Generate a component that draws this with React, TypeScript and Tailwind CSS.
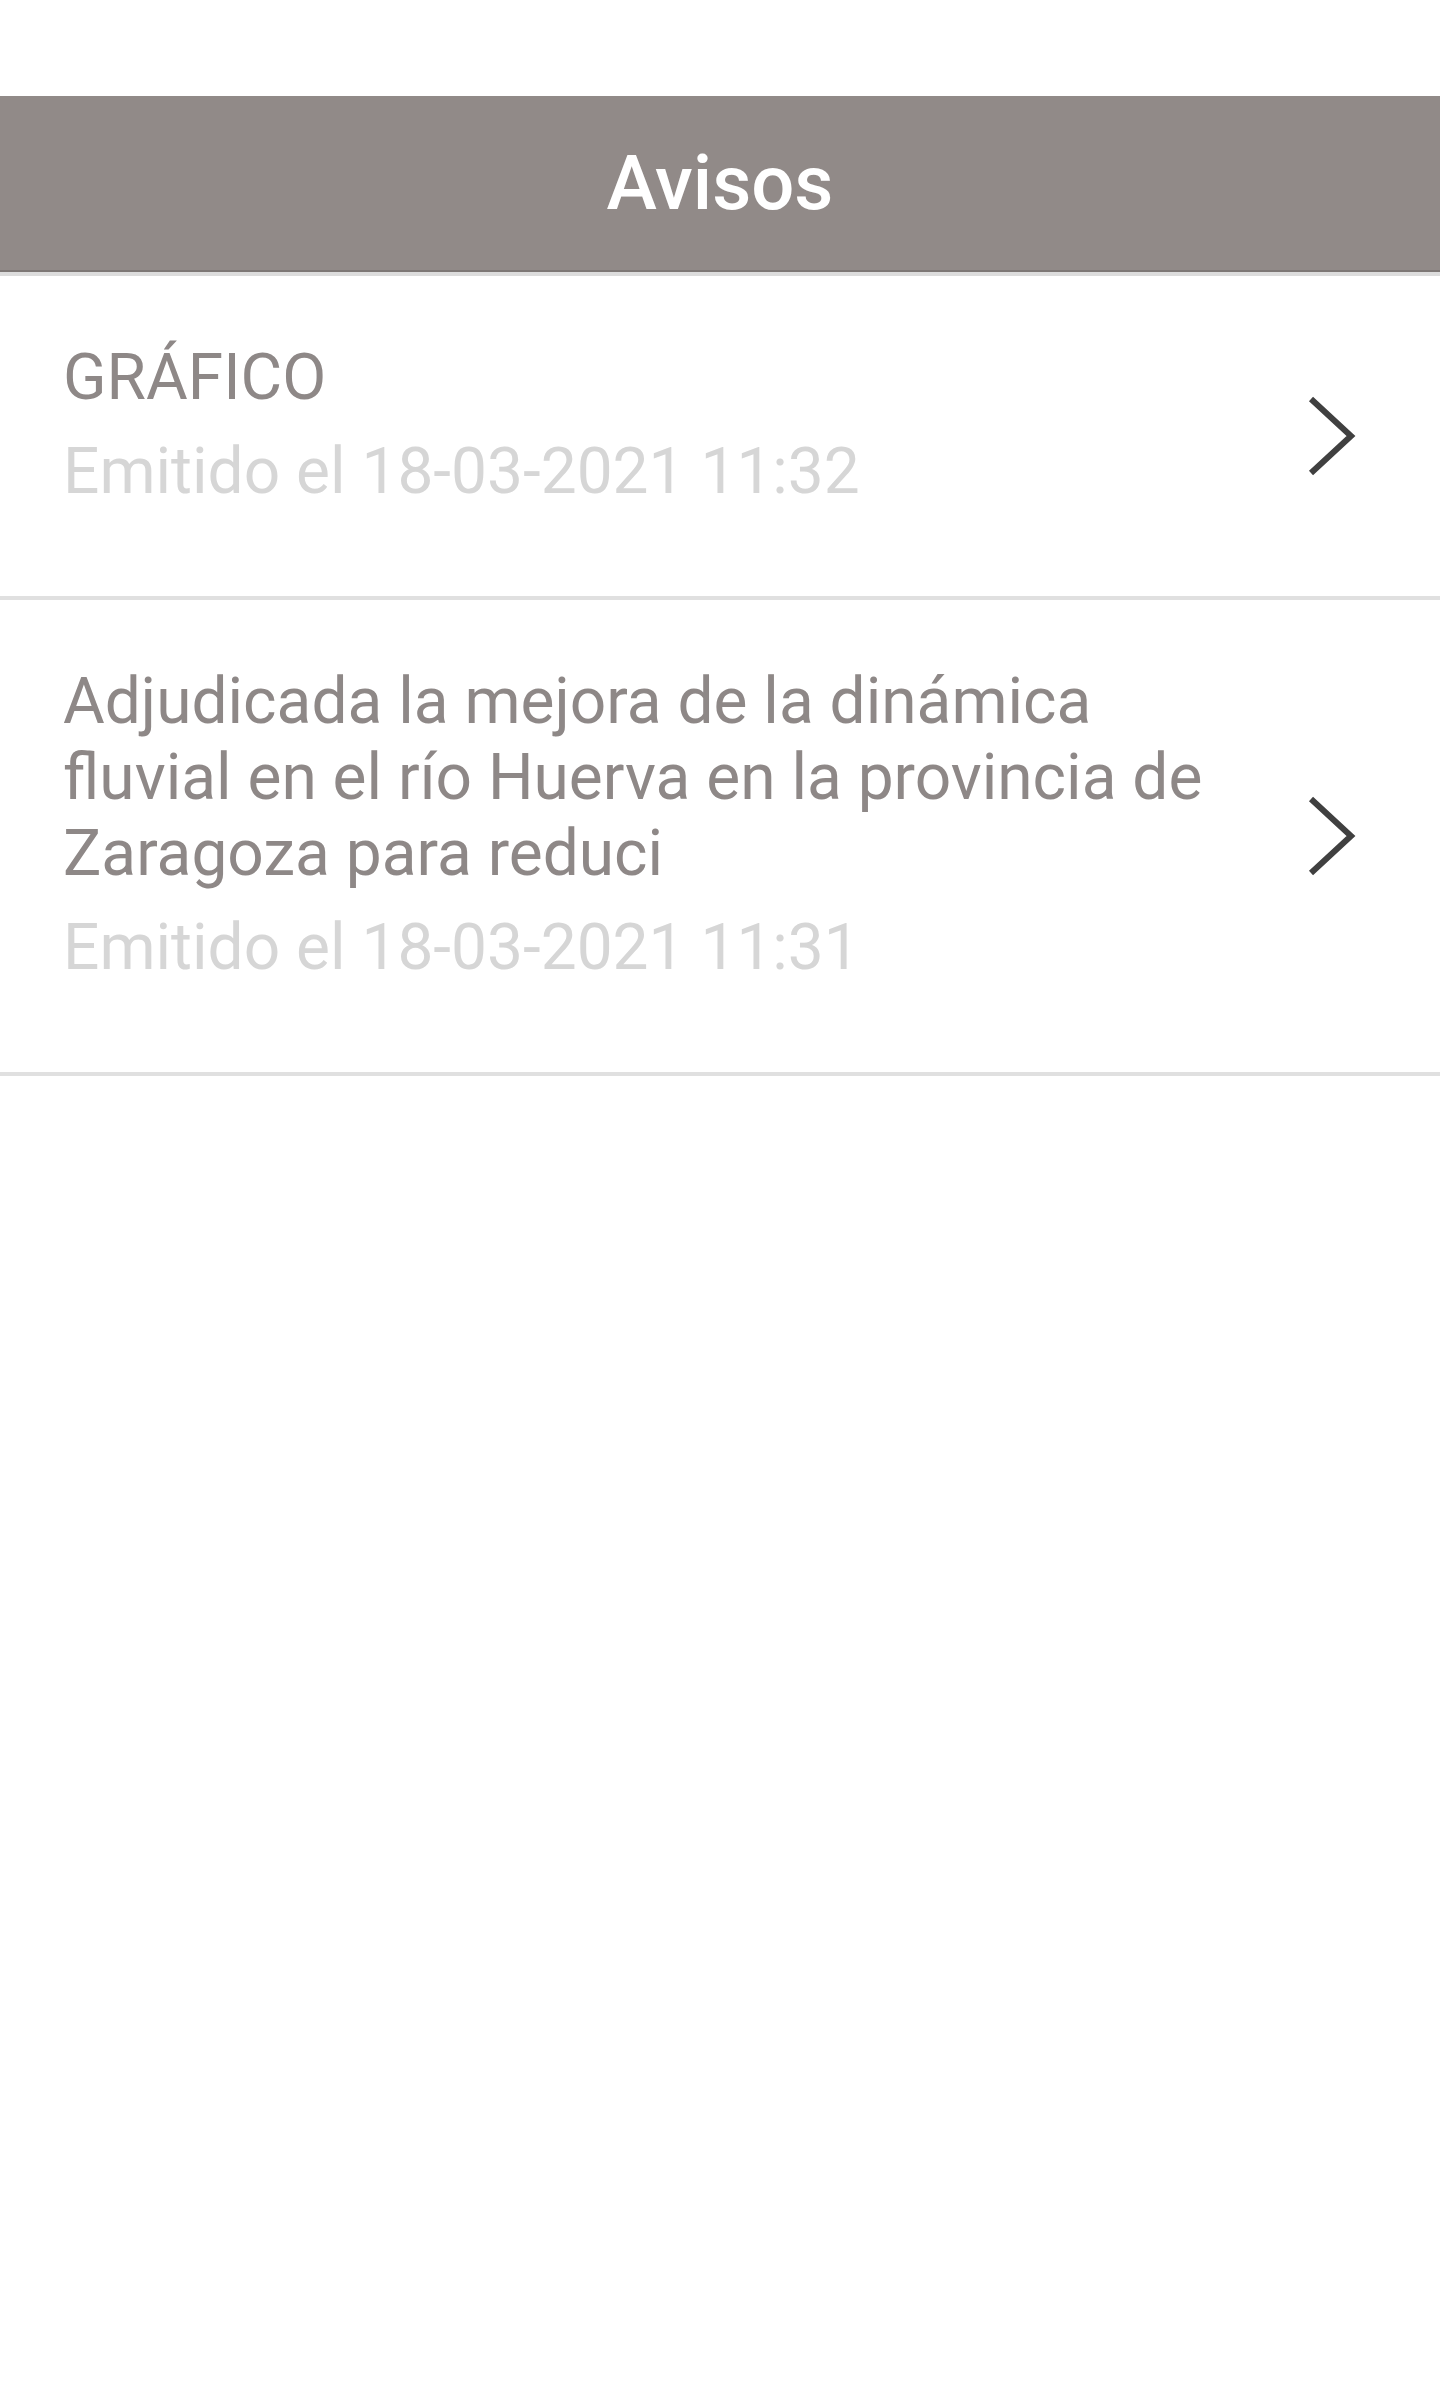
import React from "react";

const items = [
  { title: "GRÁFICO", date: "Emitido el 18-03-2021 11:32" },
  {
    title:
      "Adjudicada la mejora de la dinámica fluvial en el río Huerva en la provincia de Zaragoza para reduci",
    date: "Emitido el 18-03-2021 11:31",
  },
];

function Chevron() {
  return (
    <svg width="50" height="82" viewBox="0 0 50 82" className="shrink-0">
      <polyline
        points="4,4 44,41 4,78"
        fill="none"
        stroke="#404040"
        strokeWidth="6"
        strokeLinecap="butt"
        strokeLinejoin="miter"
      />
    </svg>
  );
}

export default function App() {
  return (
    <div className="min-h-[2392px] bg-white font-['Roboto',sans-serif]">
      <div className="h-[96px]" />
      <header className="h-[176px] bg-[#918a88] border-b-2 border-[#7d7775] flex items-center justify-center">
        <h1 className="text-white text-[76px] font-medium leading-none">Avisos</h1>
      </header>
      <div className="h-[4px] bg-[#dcdcdc]" />
      <ul>
        {items.map((it, i) => (
          <li
            key={i}
            className="flex items-center pl-[63px] pr-[83px] border-b-4 border-[#e0e0e0]"
          >
            <div className="w-[1178px] pt-[64px] pb-[86px]">
              <div className="text-[64px] leading-[76px] text-[#8e8887]">{it.title}</div>
              <div className="mt-[18px] text-[64px] leading-[76px] text-[#d6d6d6]">{it.date}</div>
            </div>
            <div className="flex-1" />
            <Chevron />
          </li>
        ))}
      </ul>
    </div>
  );
}
